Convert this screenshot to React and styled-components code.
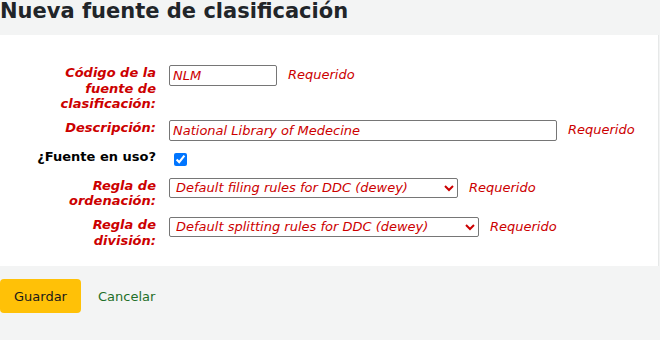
import React from "react";
import styled, { createGlobalStyle } from "styled-components";

const GlobalStyle = createGlobalStyle`
  html, body {
    margin: 0;
    padding: 0;
    background: #f3f4f4;
    font-family: "DejaVu Sans", "Liberation Sans", sans-serif;
    font-size: 13px;
    color: #000;
  }
`;

const Page = styled.div`
  width: 660px;
  min-height: 340px;
  background: #f3f4f4;
`;

const Title = styled.h1`
  margin: 0;
  padding-top: 1px;
  height: 34px;
  font-size: 21px;
  line-height: 20px;
  font-weight: bold;
  color: #212529;
`;

const Panel = styled.form`
  background: #fff;
  width: 659px;
  padding: 30px 0 18px;
  display: flex;
  flex-direction: column;
  gap: 8px;
  box-sizing: border-box;
  border-right: 1px solid #e6e8e8;
`;

const Row = styled.div`
  display: flex;
  align-items: flex-start;
  min-height: ${(p) => (p.$tall ? "21px" : "auto")};
`;

const Label = styled.label`
  width: 120px;
  margin-left: 36px;
  margin-right: 13px;
  flex-shrink: 0;
  text-align: right;
  font-weight: bold;
  line-height: 15.6px;
  font-style: ${(p) => (p.$required ? "italic" : "normal")};
  color: ${(p) => (p.$required ? "#cc0000" : "#000")};
`;

const TextInput = styled.input`
  width: ${(p) => p.$width}px;
  height: 21px;
  box-sizing: border-box;
  margin: 0;
  padding: 1px 3px;
  border: 1px solid #767676;
  border-radius: 2px;
  font-family: "DejaVu Sans", sans-serif;
  font-size: 13px;
  font-style: italic;
  color: #cc0000;
  outline: none;
`;

const Select = styled.select`
  width: ${(p) => p.$width}px;
  height: 20px;
  box-sizing: border-box;
  margin: 0;
  padding: 0 2px;
  border: 1px solid #767676;
  border-radius: 2px;
  background: #fff;
  font-family: "DejaVu Sans", sans-serif;
  font-size: 13px;
  font-style: italic;
  color: #cc0000;
`;

const Checkbox = styled.input`
  width: 13px;
  height: 13px;
  margin: 4px 0 0 5px;
`;

const Required = styled.span`
  margin-left: 11px;
  font-style: italic;
  color: #cc0000;
  line-height: 19px;
`;

const Actions = styled.div`
  display: flex;
  align-items: center;
  gap: 17px;
  padding-top: 13px;
`;

const SaveButton = styled.button`
  height: 34px;
  padding: 0 14px;
  border: none;
  border-radius: 4px;
  background: #ffc107;
  color: #1a1a1a;
  font-family: "DejaVu Sans", sans-serif;
  font-size: 13px;
  cursor: pointer;
`;

const CancelLink = styled.a`
  color: #1f6f28;
  text-decoration: none;
  font-size: 13px;
`;

export default function App() {
  return (
    <Page>
      <GlobalStyle />
      <Title>Nueva fuente de clasificación</Title>
      <Panel onSubmit={(e) => e.preventDefault()}>
        <Row>
          <Label $required>Código de la fuente de clasificación:</Label>
          <TextInput $width={108} defaultValue="NLM" />
          <Required>Requerido</Required>
        </Row>
        <Row>
          <Label $required>Descripción:</Label>
          <TextInput $width={388} defaultValue="National Library of Medecine" />
          <Required>Requerido</Required>
        </Row>
        <Row $tall>
          <Label>¿Fuente en uso?</Label>
          <Checkbox type="checkbox" defaultChecked />
        </Row>
        <Row>
          <Label $required>Regla de ordenación:</Label>
          <Select $width={289} defaultValue="dewey">
            <option value="dewey">Default filing rules for DDC (dewey)</option>
          </Select>
          <Required>Requerido</Required>
        </Row>
        <Row>
          <Label $required>Regla de división:</Label>
          <Select $width={310} defaultValue="dewey">
            <option value="dewey">Default splitting rules for DDC (dewey)</option>
          </Select>
          <Required>Requerido</Required>
        </Row>
      </Panel>
      <Actions>
        <SaveButton type="button">Guardar</SaveButton>
        <CancelLink href="#">Cancelar</CancelLink>
      </Actions>
    </Page>
  );
}
